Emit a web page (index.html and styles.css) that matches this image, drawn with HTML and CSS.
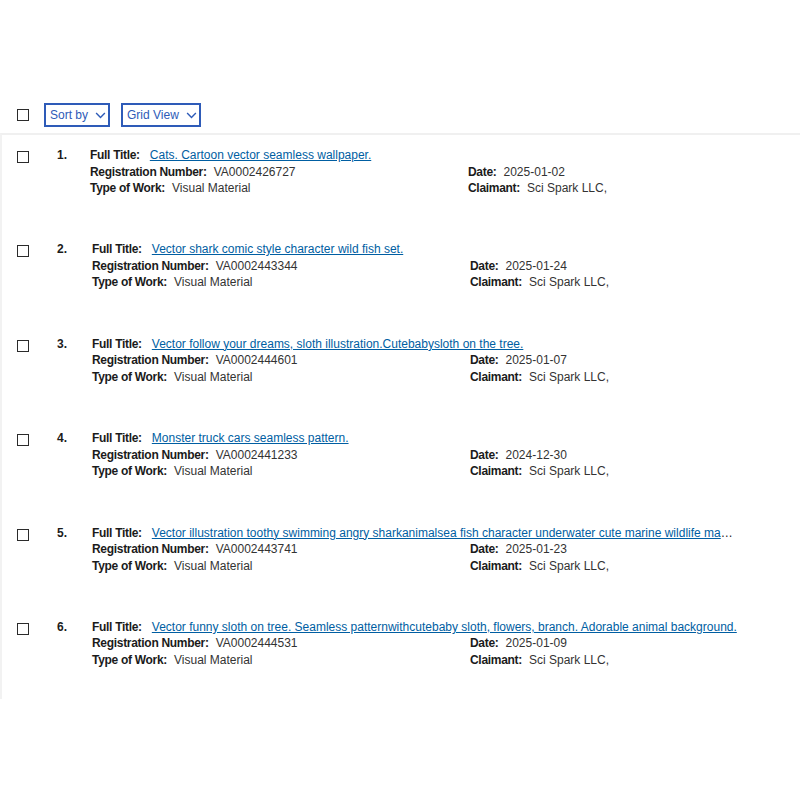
FILE: index.html
```html
<!DOCTYPE html>
<html lang="en">
<head>
<meta charset="utf-8">
<title>Search results</title>
<link rel="stylesheet" href="styles.css">
</head>
<body>
<div class="toolbar">
  <span class="checkbox"></span>
  <button class="select-btn">Sort by <svg class="chev" viewBox="0 0 12 8" width="11" height="7"><path d="M1 1.2 6 6.2 11 1.2" fill="none" stroke="currentColor" stroke-width="1.6"/></svg></button>
  <button class="select-btn">Grid View <svg class="chev" viewBox="0 0 12 8" width="11" height="7"><path d="M1 1.2 6 6.2 11 1.2" fill="none" stroke="currentColor" stroke-width="1.6"/></svg></button>
</div>
<div class="results">
  <div class="row">
    <span class="checkbox"></span>
    <span class="num">1.</span>
    <div class="info first">
      <div class="title"><b>Full Title:</b><a href="#">Cats. Cartoon vector seamless wallpaper.</a></div>
      <div class="field"><b>Registration Number:</b><span>VA0002426727</span></div>
      <div class="field"><b>Date:</b><span>2025-01-02</span></div>
      <div class="field"><b>Type of Work:</b><span>Visual Material</span></div>
      <div class="field"><b>Claimant:</b><span>Sci Spark LLC,</span></div>
    </div>
  </div>
  <div class="row">
    <span class="checkbox"></span>
    <span class="num">2.</span>
    <div class="info">
      <div class="title"><b>Full Title:</b><a href="#">Vector shark comic style character wild fish set.</a></div>
      <div class="field"><b>Registration Number:</b><span>VA0002443344</span></div>
      <div class="field"><b>Date:</b><span>2025-01-24</span></div>
      <div class="field"><b>Type of Work:</b><span>Visual Material</span></div>
      <div class="field"><b>Claimant:</b><span>Sci Spark LLC,</span></div>
    </div>
  </div>
  <div class="row">
    <span class="checkbox"></span>
    <span class="num">3.</span>
    <div class="info">
      <div class="title"><b>Full Title:</b><a href="#">Vector follow your dreams, sloth illustration.Cutebabysloth on the tree.</a></div>
      <div class="field"><b>Registration Number:</b><span>VA0002444601</span></div>
      <div class="field"><b>Date:</b><span>2025-01-07</span></div>
      <div class="field"><b>Type of Work:</b><span>Visual Material</span></div>
      <div class="field"><b>Claimant:</b><span>Sci Spark LLC,</span></div>
    </div>
  </div>
  <div class="row">
    <span class="checkbox"></span>
    <span class="num">4.</span>
    <div class="info">
      <div class="title"><b>Full Title:</b><a href="#">Monster truck cars seamless pattern.</a></div>
      <div class="field"><b>Registration Number:</b><span>VA0002441233</span></div>
      <div class="field"><b>Date:</b><span>2024-12-30</span></div>
      <div class="field"><b>Type of Work:</b><span>Visual Material</span></div>
      <div class="field"><b>Claimant:</b><span>Sci Spark LLC,</span></div>
    </div>
  </div>
  <div class="row">
    <span class="checkbox"></span>
    <span class="num">5.</span>
    <div class="info">
      <div class="title"><b>Full Title:</b><a href="#">Vector illustration toothy swimming angry sharkanimalsea fish character underwater cute marine wildlife mascot cartoon</a></div>
      <div class="field"><b>Registration Number:</b><span>VA0002443741</span></div>
      <div class="field"><b>Date:</b><span>2025-01-23</span></div>
      <div class="field"><b>Type of Work:</b><span>Visual Material</span></div>
      <div class="field"><b>Claimant:</b><span>Sci Spark LLC,</span></div>
    </div>
  </div>
  <div class="row">
    <span class="checkbox"></span>
    <span class="num">6.</span>
    <div class="info">
      <div class="title"><b>Full Title:</b><a href="#">Vector funny sloth on tree. Seamless patternwithcutebaby sloth, flowers, branch. Adorable animal background.</a></div>
      <div class="field"><b>Registration Number:</b><span>VA0002444531</span></div>
      <div class="field"><b>Date:</b><span>2025-01-09</span></div>
      <div class="field"><b>Type of Work:</b><span>Visual Material</span></div>
      <div class="field"><b>Claimant:</b><span>Sci Spark LLC,</span></div>
    </div>
  </div>
</div>
</body>
</html>
```
FILE: styles.css
```css
* { box-sizing: border-box; }
body {
  margin: 0;
  background: #fff;
  font-family: "Liberation Sans", Arial, sans-serif;
  font-size: 12px;
  color: #1b1b1b;
}
.toolbar {
  display: flex;
  align-items: center;
  padding: 102px 0 0 17px;
  height: 128px;
}
.checkbox {
  display: inline-block;
  width: 12px;
  height: 12px;
  border: 1.5px solid #2b2b2b;
  flex: none;
}
.toolbar .checkbox { margin-right: 15px; }
.select-btn {
  display: inline-flex;
  align-items: center;
  gap: 7px;
  height: 24px;
  padding: 0 2px 0 4px;
  margin-right: 11px;
  border: 2px solid #2e5bb8;
  background: #fff;
  color: #2e5bb8;
  font-family: inherit;
  font-size: 12px;
}
.chev { display: block; }
.results {
  margin-top: 5px;
  border-top: 2px solid #f0f0f0;
  border-left: 2px solid #f2f2f2;
  height: 566px;
}
.row {
  display: flex;
  align-items: flex-start;
  height: 94.4px;
  padding: 12px 0 0 15px;
}
.row .checkbox { margin-top: 4px; }
.num {
  font-weight: bold;
  width: 35px;
  margin-left: 28px;
  line-height: 16.5px;
}
.info {
  display: grid;
  grid-template-columns: 378px 270px;
  line-height: 16.5px;
}
.info.first { margin-left: -2px; }
.info.first .field:nth-child(odd) { margin-right: -2px; }
.title {
  grid-column: 1 / 3;
  white-space: nowrap;
  overflow: hidden;
  text-overflow: ellipsis;
  width: 646px;
}
.info b { font-weight: bold; margin-right: 7px; letter-spacing: -0.3px; }
.info .title b { margin-right: 10px; }
.title a { color: #005ea2; text-decoration: underline; }
.field span { color: #333; }
```
